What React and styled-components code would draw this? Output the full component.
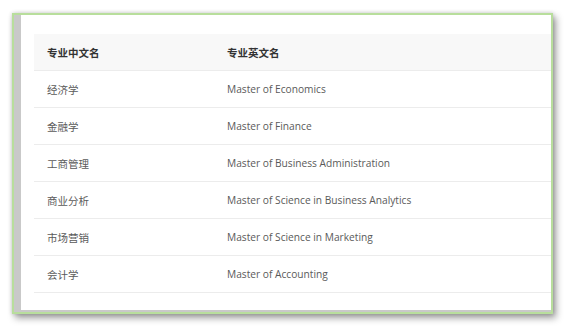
import React from "react";
import styled, { createGlobalStyle } from "styled-components";

const Global = createGlobalStyle`
  html, body { margin: 0; padding: 0; background: #ffffff; }
  body { font-family: "Open Sans", "Noto Sans CJK SC", sans-serif; }
`;

const Stage = styled.div`
  width: 571px;
  height: 332px;
  padding: 13px 0 0 12px;
  box-sizing: border-box;
`;

const Frame = styled.div`
  width: 541px;
  height: 301px;
  box-sizing: border-box;
  border: 2px solid #b8de9c;
  background: #c9c9c9;
  box-shadow: 3px 4px 7px rgba(0, 0, 0, 0.38), 0 0 4px rgba(0, 0, 0, 0.18);
  padding: 0 0 2px 7px;
  display: flex;
`;

const Sheet = styled.div`
  flex: 1;
  background: #ffffff;
  overflow: hidden;
  padding: 19px 0 0 13px;
`;

const Table = styled.div`
  width: 600px;
  display: flex;
  flex-direction: column;
`;

const Row = styled.div`
  display: grid;
  grid-template-columns: 180px 1fr;
  height: 37px;
  box-sizing: border-box;
  align-items: center;
  border-bottom: 1px solid #ececec;
  background: ${(p) => (p.$head ? "#f8f8f8" : "#ffffff")};
`;

const Cell = styled.div`
  padding-left: 13px;
  font-size: ${(p) => (p.$latin ? "10.2px" : "10.5px")};
  font-weight: ${(p) => (p.$head ? 700 : 400)};
  color: ${(p) => (p.$head ? "#333333" : "#5a5a5a")};
  font-family: ${(p) =>
    p.$latin
      ? `"Open Sans", "Noto Sans CJK SC", sans-serif`
      : `"Noto Sans CJK SC", sans-serif`};
  white-space: nowrap;
`;

const rows = [
  ["经济学", "Master of Economics"],
  ["金融学", "Master of Finance"],
  ["工商管理", "Master of Business Administration"],
  ["商业分析", "Master of Science in Business Analytics"],
  ["市场营销", "Master of Science in Marketing"],
  ["会计学", "Master of Accounting"],
];

export default function App() {
  return (
    <Stage>
      <Global />
      <Frame>
        <Sheet>
          <Table>
            <Row $head>
              <Cell $head>专业中文名</Cell>
              <Cell $head>专业英文名</Cell>
            </Row>
            {rows.map(([zh, en]) => (
              <Row key={zh}>
                <Cell>{zh}</Cell>
                <Cell $latin>{en}</Cell>
              </Row>
            ))}
          </Table>
        </Sheet>
      </Frame>
    </Stage>
  );
}
